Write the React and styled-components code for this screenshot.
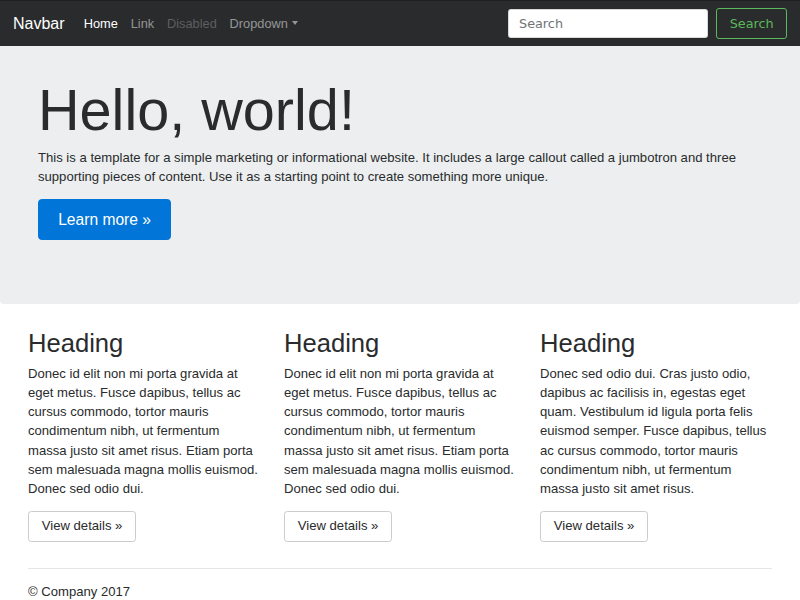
import React from "react";
import styled, { createGlobalStyle } from "styled-components";

const GlobalStyle = createGlobalStyle`
  html { font-size: 12.8px; }
  body {
    margin: 0;
    font-family: "Liberation Sans", Arial, sans-serif;
    font-size: 13.1px;
    line-height: 19.2px;
    color: #292b2c;
    background: #fff;
  }
  * { box-sizing: border-box; }
`;

const Navbar = styled.nav`
  display: flex;
  align-items: center;
  height: 46px;
  padding: 0 13px;
  background: #292b2c;
  border-top: 1px solid #1e1f20;
  font-size: 12.8px;
`;

const Brand = styled.a`
  font-size: 16px;
  line-height: 24px;
  color: #fff;
  margin-right: 12.8px;
  text-decoration: none;
`;

const NavList = styled.ul`
  display: flex;
  list-style: none;
  margin: 0;
  padding: 0;
  flex: 1;
`;

const NavLink = styled.a`
  display: flex;
  align-items: center;
  padding: 0 6.4px;
  color: ${(p) =>
    p.$active
      ? "#fff"
      : p.$disabled
      ? "rgba(255,255,255,.25)"
      : "rgba(255,255,255,.5)"};
  text-decoration: none;
`;

const Caret = styled.span`
  display: inline-block;
  margin-left: 4px;
  border-top: 4px solid currentColor;
  border-left: 3.5px solid transparent;
  border-right: 3.5px solid transparent;
`;

const SearchForm = styled.form`
  display: flex;
  align-items: center;
  gap: 8px;
  padding-left: 1px;
`;

const SearchInput = styled.input`
  width: 200px;
  height: 29px;
  padding: 0 9.6px;
  border: 1px solid rgba(0, 0, 0, 0.15);
  border-radius: 3px;
  font-family: "DejaVu Sans", sans-serif;
  font-size: 12.8px;
  color: #464a4c;
  outline: none;
  &::placeholder { color: #6f7375; }
`;

const OutlineButton = styled.button`
  height: 31px;
  padding: 0 12.3px;
  background: transparent;
  border: 1px solid #5cb85c;
  border-radius: 3px;
  color: #5cb85c;
  font-family: "DejaVu Sans", sans-serif;
  font-size: 12.8px;
`;

const Jumbotron = styled.div`
  background: #eceeef;
  padding: 33px 38px 51.2px;
  margin-bottom: 25.6px;
  border-radius: 0 0 4px 4px;
`;

const Display = styled.h1`
  font-size: 57.6px;
  font-weight: 300;
  line-height: 1.1;
  margin: 0 0 5.4px;
`;

const Lead = styled.p`
  margin: 0 0 12.8px;
  max-width: 724px;
`;

const PrimaryButton = styled.a`
  display: inline-block;
  padding: 9.6px 19.2px;
  font-size: 15.6px;
  line-height: 19.5px;
  color: #fff;
  background: #0275d8;
  border: 1px solid #0275d8;
  border-radius: 3.84px;
  text-decoration: none;
`;

const Container = styled.div`
  padding: 0 28px;
`;

const Row = styled.div`
  display: grid;
  grid-template-columns: repeat(3, 232px);
  column-gap: 24px;
`;

const Heading = styled.h2`
  font-size: 25.6px;
  font-weight: 400;
  line-height: 1.1;
  margin: 0 0 6.4px;
`;

const Text = styled.p`
  margin: 0 0 12.8px;
`;

const SecondaryButton = styled.a`
  display: inline-block;
  padding: 6.4px 12.8px;
  line-height: 16.4px;
  color: #292b2c;
  background: #fff;
  border: 1px solid #ccc;
  border-radius: 3.2px;
  text-decoration: none;
`;

const Rule = styled.hr`
  margin: 12.8px 0;
  border: 0;
  border-top: 1px solid rgba(0, 0, 0, 0.1);
`;

const Footer = styled.footer`
  p { margin: 0; }
`;

const copy =
  "Donec id elit non mi porta gravida at eget metus. Fusce dapibus, tellus ac cursus commodo, tortor mauris condimentum nibh, ut fermentum massa justo sit amet risus. Etiam porta sem malesuada magna mollis euismod. Donec sed odio dui.";

const columns = [
  copy,
  copy,
  "Donec sed odio dui. Cras justo odio, dapibus ac facilisis in, egestas eget quam. Vestibulum id ligula porta felis euismod semper. Fusce dapibus, tellus ac cursus commodo, tortor mauris condimentum nibh, ut fermentum massa justo sit amet risus.",
];

export default function App() {
  return (
    <>
      <GlobalStyle />
      <Navbar>
        <Brand href="#">Navbar</Brand>
        <NavList>
          <li><NavLink $active href="#">Home</NavLink></li>
          <li><NavLink href="#">Link</NavLink></li>
          <li><NavLink $disabled href="#">Disabled</NavLink></li>
          <li>
            <NavLink href="#">
              Dropdown<Caret />
            </NavLink>
          </li>
        </NavList>
        <SearchForm onSubmit={(e) => e.preventDefault()}>
          <SearchInput type="text" placeholder="Search" />
          <OutlineButton type="submit">Search</OutlineButton>
        </SearchForm>
      </Navbar>

      <Jumbotron>
        <Display>Hello, world!</Display>
        <Lead>
          This is a template for a simple marketing or informational website. It
          includes a large callout called a jumbotron and three supporting pieces
          of content. Use it as a starting point to create something more unique.
        </Lead>
        <Text>
          <PrimaryButton href="#">Learn more »</PrimaryButton>
        </Text>
      </Jumbotron>

      <Container>
        <Row>
          {columns.map((text, i) => (
            <div key={i}>
              <Heading>Heading</Heading>
              <Text>{text}</Text>
              <Text>
                <SecondaryButton href="#">View details »</SecondaryButton>
              </Text>
            </div>
          ))}
        </Row>
        <Rule />
        <Footer>
          <p>© Company 2017</p>
        </Footer>
      </Container>
    </>
  );
}
